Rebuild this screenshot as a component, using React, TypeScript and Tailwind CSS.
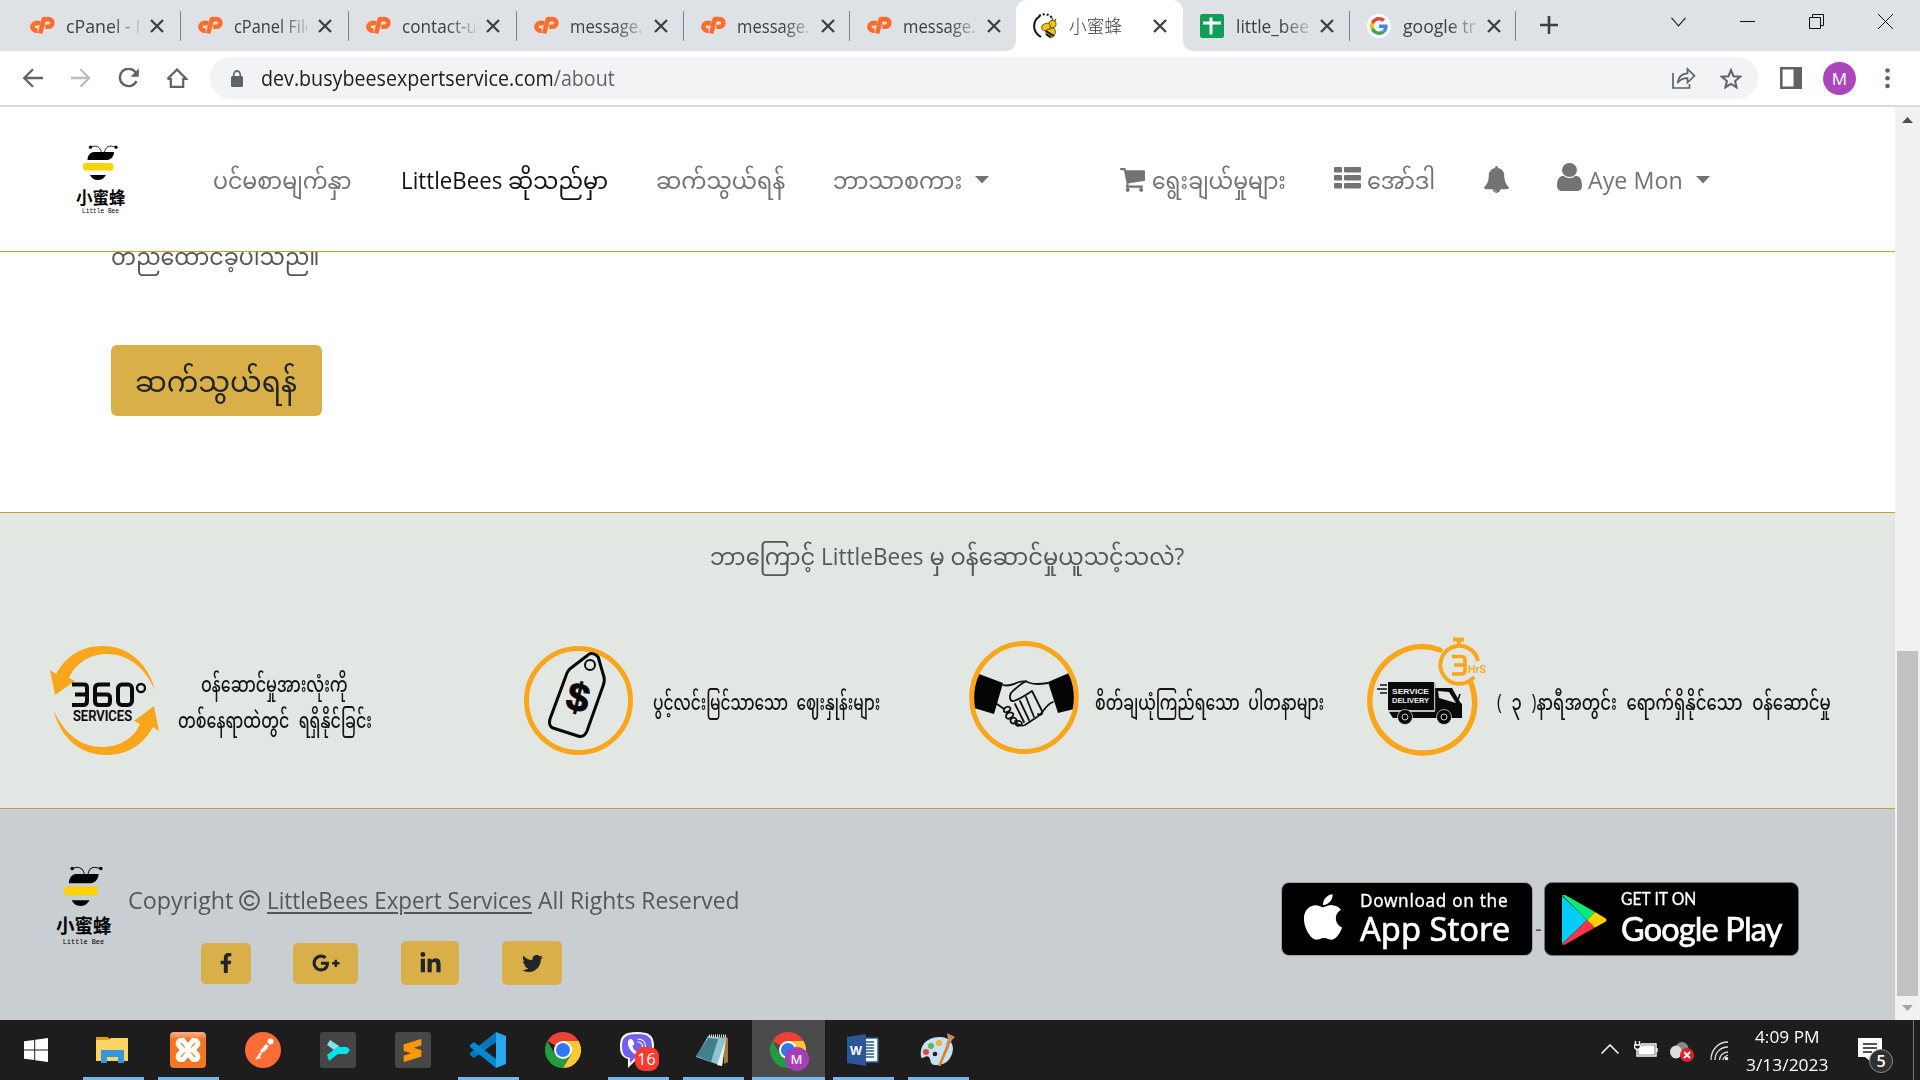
import { useLayoutEffect, useRef, useState } from "react";
import type { ReactNode } from "react";
import { FaFacebookF, FaGooglePlusG, FaLinkedinIn, FaTwitter, FaApple } from "react-icons/fa";
import { SiXampp, SiSublimetext } from "react-icons/si";

/* One line of text that is squeezed or stretched to a given width. */
function Fit({ w, className = "", inner = "", children }: { w: number; className?: string; inner?: string; children: ReactNode }) {
  const ref = useRef<HTMLSpanElement>(null);
  const [scale, setScale] = useState(1);
  useLayoutEffect(() => {
    const natural = ref.current?.offsetWidth ?? 0;
    if (natural > 0) setScale(w / natural);
  }, [w]);
  return (
    <span className={`block shrink-0 whitespace-nowrap ${className}`} style={{ width: w }}>
      <span ref={ref} className={`inline-block origin-left ${inner}`} style={{ transform: `scaleX(${scale})` }}>
        {children}
      </span>
    </span>
  );
}

function CpIcon() {
  return (
    <svg width="25" height="19" viewBox="0 0 25 18" fill="none" stroke="#ff6c2c" strokeWidth="4.600" strokeLinejoin="round">
      <path d="M10.400 6.600H6.400a3.800 3.800 0 0 0-1 7.500h2.200" />
      <path d="M10.200 17 13.800 2.600h4.600a3.700 3.700 0 0 1 .4 7.600h-3.600" />
    </svg>
  );
}

function BeeFavicon() {
  return (
    <svg width="26" height="26" viewBox="0 0 26 26">
      <path d="M8 3C0 8 0 19 9 24" fill="none" stroke="#111" strokeWidth="2" />
      <path d="M7 3c5-3 10-2 13 2" fill="none" stroke="#111" strokeWidth="2.200" strokeDasharray="2 2" />
      <path d="m20 5 1 4m3-3-2 3" stroke="#111" />
      <circle cx="20.500" cy="11" r="3.700" fill="#f7c600" stroke="#111" strokeWidth=".6" />
      <ellipse cx="14" cy="14" rx="4.500" ry="3.500" fill="#f7c600" stroke="#111" strokeWidth=".6" transform="rotate(-20 14 14)" />
      <path d="m14 17 8-2c3 4 1 8-3 10-4-1-6-4-5-8z" fill="#f7c600" stroke="#111" strokeWidth=".6" />
      <path d="m14 18 8 5m-8-2 5 3" stroke="#111" strokeWidth="2" />
    </svg>
  );
}

function SheetsIcon() {
  return (
    <svg width="24" height="24" viewBox="0 0 24 24">
      <rect width="24" height="24" rx="2.500" fill="#0f9d58" />
      <path d="M11 3.500v17M3 9h18" stroke="#fff" strokeWidth="3" />
    </svg>
  );
}

function GoogleIcon() {
  return (
    <svg width="24" height="24" viewBox="0 0 24 24">
      <circle cx="12" cy="12" r="12" fill="#fff" />
      <g transform="translate(3 3) scale(.375)">
        <path fill="#EA4335" d="M24 9.500c3.540 0 6.710 1.220 9.210 3.600l6.850-6.850C35.900 2.380 30.470 0 24 0 14.620 0 6.510 5.380 2.560 13.220l7.980 6.190C12.430 13.720 17.740 9.500 24 9.500z" />
        <path fill="#4285F4" d="M46.980 24.550c0-1.570-.15-3.090-.38-4.550H24v9.020h12.940c-.58 2.960-2.260 5.480-4.780 7.180l7.730 6c4.510-4.180 7.090-10.360 7.090-17.650z" />
        <path fill="#FBBC05" d="M10.530 28.590c-.48-1.450-.76-2.990-.76-4.590s.27-3.140.76-4.590l-7.980-6.190C.92 16.460 0 20.120 0 24c0 3.880.92 7.540 2.560 10.780l7.970-6.190z" />
        <path fill="#34A853" d="M24 48c6.480 0 11.930-2.130 15.890-5.810l-7.730-6c-2.150 1.450-4.920 2.300-8.160 2.300-6.260 0-11.570-4.220-13.470-9.910l-7.980 6.190C6.510 42.620 14.620 48 24 48z" />
      </g>
    </svg>
  );
}

function TabClose() {
  return (
    <svg width="14" height="14" viewBox="0 0 14 14" stroke="#3c4043" strokeWidth="2.300" fill="none">
      <path d="m1 1 12 12M13 1 1 13" />
    </svg>
  );
}

type TabData = { icon: ReactNode; title: string; w: number; textW: number; active?: boolean; sep?: boolean };

const tabs: TabData[] = [
  { icon: <CpIcon />, title: "cPanel - M", w: 168, textW: 85, sep: true },
  { icon: <CpIcon />, title: "cPanel File", w: 168, textW: 80, sep: true },
  { icon: <CpIcon />, title: "contact-us", w: 168, textW: 83, sep: true },
  { icon: <CpIcon />, title: "message.", w: 167, textW: 73, sep: true },
  { icon: <CpIcon />, title: "message.", w: 166, textW: 73, sep: true },
  { icon: <CpIcon />, title: "message.", w: 166, textW: 73 },
  { icon: <BeeFavicon />, title: "小蜜蜂", w: 167, textW: 53, active: true },
  { icon: <SheetsIcon />, title: "little_bee_", w: 167, textW: 81, sep: true },
  { icon: <GoogleIcon />, title: "google tran", w: 166, textW: 93, sep: true },
];

function Tab({ t }: { t: TabData }) {
  return (
    <div
      className={`relative flex h-[51px] shrink-0 items-center pl-[16px] ${t.active ? "rounded-t-[11px] bg-white" : ""}`}
      style={{ width: t.w }}
    >
      <div className="flex w-[26px] shrink-0 justify-center">{t.icon}</div>
      <div
        className={`ml-[11px] w-[73px] shrink-0 overflow-hidden ${
          t.active ? "" : "[mask-image:linear-gradient(to_right,black_62%,rgba(0,0,0,0.2)_100%)]"
        }`}
      >
        <Fit w={t.textW} className={`text-[18px] leading-[26px] text-[#3c4043] ${t.active ? "font-light" : ""}`}>
          {t.title}
        </Fit>
      </div>
      <div className="ml-[11px] flex w-[14px] shrink-0">
        <TabClose />
      </div>
      {t.sep && <div className="absolute right-0 top-[11px] h-[30px] w-[1.5px] bg-[#808387]" />}
      {t.active && (
        <>
          <svg className="absolute -left-[10px] bottom-0" width="10" height="10"><path d="M10 0v10H0A10 10 0 0 0 10 0z" fill="#fff" /></svg>
          <svg className="absolute -right-[10px] bottom-0" width="10" height="10"><path d="M0 0v10h10A10 10 0 0 1 0 0z" fill="#fff" /></svg>
        </>
      )}
    </div>
  );
}

function TabStrip() {
  return (
    <div className="flex h-[51px] bg-[#dee1e6] pl-[13px]">
      {tabs.map((t, i) => (
        <Tab key={i} t={t} />
      ))}
      <svg className="ml-[24px] mt-[16px]" width="18" height="18" stroke="#3c4043" strokeWidth="2.600"><path d="M9 0v18M0 9h18" /></svg>
      <svg className="ml-[113px] mt-[17px]" width="15" height="10" fill="none" stroke="#222" strokeWidth="1.200"><path d="m.5.800 7 8 7-8" /></svg>
      <svg className="ml-[54px] mt-[21px]" width="15" height="2"><path d="M0 .5h15" stroke="#111" /></svg>
      <svg className="ml-[54px] mt-[14px]" width="15" height="15" fill="none" stroke="#111"><path d="M.5 3.500h11v11H.5zM3.500 3V.5h11v11H12" /></svg>
      <svg className="ml-[54px] mt-[14px]" width="15" height="15" stroke="#111"><path d="m0 0 15 15M15 0 0 15" /></svg>
    </div>
  );
}

function Toolbar() {
  return (
    <div className="flex h-[54px] items-center bg-white pl-[22px]">
      <svg width="22" height="20" viewBox="0 0 22 20" fill="none" stroke="#5f6368" strokeWidth="2.300"><path d="M21 10H2.500M11 1.200 2.200 10l8.800 8.800" /></svg>
      <svg className="ml-[27px]" width="20" height="20" viewBox="0 0 20 20" fill="none" stroke="#babcbe" strokeWidth="2.300"><path d="M0 10h17.500M9.500 1.200l8.500 8.800-8.500 8.800" /></svg>
      <svg className="ml-[27px]" width="22" height="20" viewBox="0 0 22 20" fill="none" stroke="#5f6368" strokeWidth="2.400"><path d="M17.800 4.600A8.700 8.700 0 1 0 18.500 13" /><path d="M20.800.5v8.200h-8.200z" fill="#5f6368" stroke="none" /></svg>
      <svg className="ml-[26px]" width="22" height="20" viewBox="0 0 22 20" fill="none" stroke="#5f6368" strokeWidth="2.200"><path d="M4.800 10v8.800h12.400V10M1.500 11 11 1.500l9.500 9.500h-3.600M1.500 11H5" /></svg>
      <div className="ml-[22px] flex h-[42px] w-[1548px] items-center rounded-full bg-[#f1f3f4] pl-[21px]">
        <svg width="12" height="17" viewBox="0 0 13 17" preserveAspectRatio="none"><rect y="6" width="13" height="11" rx="1.500" fill="#5f6368" /><path d="M3 7V4.500a3.500 3.500 0 0 1 7 0V7" fill="none" stroke="#5f6368" strokeWidth="1.800" /></svg>
        <Fit w={354} className="ml-[18px] text-[21px] leading-[30px] text-[#202124]">
          dev.busybeesexpertservice.com<span className="text-[#5f6368]">/about</span>
        </Fit>
        <svg className="ml-[1057px]" width="24" height="22" viewBox="0 0 24 22" fill="none" stroke="#5f6368" strokeWidth="1.700"><path d="M1 6v15h16.500v-4" /><path d="M5.500 16c.8-6.200 4-9.300 10-9.600V2l7 6.800-7 6.700v-4.400c-4.500 0-7.500 1.200-10 4.900z" /></svg>
        <svg className="ml-[24px]" width="22" height="21" viewBox="0 0 22 21" fill="none" stroke="#5f6368" strokeWidth="2"><path d="m11 2.200 2.500 6 6.600.5-5 4.300 1.500 6.400L11 16l-5.600 3.400L6.900 13l-5-4.300 6.600-.5z" /></svg>
      </div>
      <svg className="ml-[22px]" width="22" height="22" viewBox="0 0 22 22"><path d="M1.300 1.300h19.400v19.400H1.300z" fill="none" stroke="#5f6368" strokeWidth="2.600" /><path d="M13.500 1h7.500v20h-7.500z" fill="#5f6368" /></svg>
      <div className="ml-[21px] flex size-[33px] items-center justify-center rounded-full bg-[#ab47bc] text-[17px] leading-none text-white">M</div>
      <svg className="ml-[29px]" width="5" height="21" fill="#5f6368"><circle cx="2.500" cy="2.500" r="2.300" /><circle cx="2.500" cy="10.300" r="2.300" /><circle cx="2.500" cy="18" r="2.300" /></svg>
    </div>
  );
}

function BeeLogo({ className }: { className: string }) {
  return (
    <svg className={className} viewBox="0 0 50 70" preserveAspectRatio="none">
      <path d="M14 2.500c6-3 10-1 11.500 5M40 2.500c-7-3-10.500-1-11.500 5" fill="none" stroke="#111" strokeWidth=".9" />
      <circle cx="14.500" cy="2.200" r="1.600" />
      <circle cx="40" cy="2.200" r="1.600" />
      <path d="M18 7h20c0 4-3 8-7 8H11.500c0-4 2.500-8 6.500-8z" />
      <rect x="7" y="18" width="30.500" height="7.500" rx="3" fill="#ffd200" />
      <path d="M14 30h16c-2 3-4 5-8 5s-6.500-2-8-5z" />
      <text x="0" y="58.500" fontSize="17" fontWeight="600" fontFamily="'Noto Sans CJK SC', sans-serif" textLength="49.500" lengthAdjust="spacingAndGlyphs">小蜜蜂</text>
      <text x="6" y="68" fontSize="6.300" fontFamily="'Liberation Mono', monospace" textLength="37" lengthAdjust="spacingAndGlyphs">Little Bee</text>
    </svg>
  );
}

function Caret() {
  return <svg width="14" height="8"><path d="M0 0h14L7 7.500z" fill="#737373" /></svg>;
}

function Navbar() {
  return (
    <nav className="flex h-[145px] items-start border-b border-[#c9a02a] bg-white pl-[76px] text-[24px] leading-[32px] text-[#737373]">
      <BeeLogo className="mt-[38px] h-[70px] w-[50px]" />
      <div className="mt-[57px] flex items-center">
        <Fit w={139} className="ml-[87px]">ပင်မစာမျက်နှာ</Fit>
        <Fit w={207} className="ml-[49px] text-[#111]">LittleBees ဆိုသည်မှာ</Fit>
        <Fit w={129} className="ml-[48px]">ဆက်သွယ်ရန်</Fit>
        <Fit w={129} className="ml-[48px] mr-[13px]">ဘာသာစကား</Fit>
        <Caret />
        <svg className="ml-[131px]" width="25" height="24" viewBox="64 256 1664 1408" preserveAspectRatio="none" fill="#737373"><path d="M704 1536q0 52-38 90t-90 38-90-38-38-90 38-90 90-38 90 38 38 90zm896 0q0 52-38 90t-90 38-90-38-38-90 38-90 90-38 90 38 38 90zm128-1088v512q0 24-16.500 42.500t-40.500 21.500l-1044 122q13 60 13 70 0 16-24 64h920q26 0 45 19t19 45-19 45-45 19h-1024q-26 0-45-19t-19-45q0-11 8-31.500t16-36 21.500-40 15.500-29.500l-177-823h-204q-26 0-45-19t-19-45 19-45 45-19h256q16 0 28.500 6.500t19.500 15.500 13 24.500 8 26 5.500 29.500 4.500 26h1201q26 0 45 19t19 45z" /></svg>
        <Fit w={134} className="ml-[7px]">ရွေးချယ်မှုများ</Fit>
        <svg className="-mt-[4px] ml-[48px]" width="27" height="22" fill="#737373"><rect width="8" height="5.500" rx="1" /><rect x="10" width="17" height="5.500" rx="1" /><rect y="8" width="8" height="5.500" rx="1" /><rect x="10" y="8" width="17" height="5.500" rx="1" /><rect y="16" width="8" height="5.500" rx="1" /><rect x="10" y="16" width="17" height="5.500" rx="1" /></svg>
        <Fit w={68} className="ml-[6px]">အော်ဒါ</Fit>
        <svg className="-mt-[2px] ml-[49px]" width="25" height="27" viewBox="64 0 1664 1792" preserveAspectRatio="none" fill="#737373"><path d="M912 1696q0-16-16-16-59 0-101.500-42.500t-42.500-101.500q0-16-16-16t-16 16q0 73 51.500 124.500t124.500 51.500q16 0 16-16zm816-288q0 52-38 90t-90 38h-448q0 106-75 181t-181 75-181-75-75-181h-448q-52 0-90-38t-38-90q50-42 91-88t85-119.500 74.500-158.500 50-206 19.500-260q0-152 117-282.500t307-158.500q-8-19-8-39 0-40 28-68t68-28 68 28 28 68q0 20-8 39 190 28 307 158.500t117 282.500q0 139 19.500 260t50 206 74.500 158.500 85 119.500 91 88z" /></svg>
        <svg className="-mt-[6px] ml-[48px]" width="25" height="28" viewBox="0 128 1280 1536" preserveAspectRatio="none" fill="#737373"><path d="M1280 1399q0 109-62.500 187t-150.500 78h-854q-88 0-150.500-78t-62.500-187q0-85 8.500-160.500t31.500-152 58.500-131 94-89 134.500-34.500q131 128 313 128t313-128q76 0 134.500 34.500t94 89 58.500 131 31.500 152 8.500 160.500zm-256-887q0 159-112.500 271.500t-271.500 112.500-271.500-112.500-112.500-271.500 112.500-271.500 271.500-112.500 271.500 112.500 112.500 271.500z" /></svg>
        <Fit w={95} className="ml-[6px] mr-[13px]">Aye Mon</Fit>
        <Caret />
      </div>
    </nav>
  );
}

function Services360() {
  return (
    <svg className="h-[109px] w-[109px]" viewBox="0 0 109 109">
      <path d="M0 24 6 28C17 8 34 0 53 0c25 0 45 17 52 44C94 20 77 8 57 8 39 8 25 18 19 32l6 3L5 49z" fill="#faa61a" />
      <path d="M109 85l-6-4C92 101 75 109 56 109 31 109 10 92 4 65c11 24 28 36 48 36 18 0 32-9 38-23l-6-3 20-15z" fill="#faa61a" />
      <g fill="none" stroke="#0b0b0b" strokeWidth="4">
        <path d="M22 38.500h12q3 0 3 3V55q0 4-4 4H22M25 48.500h11" />
        <path d="M60 38.500H49q-4 0-4 4V55q0 4 4 4h8q3 0 3-4v-3q0-3.500-3-3.500H46" />
        <rect x="68" y="38.500" width="14" height="20.500" rx="4" />
        <circle cx="91" cy="42" r="4" strokeWidth="2.300" />
      </g>
      <text x="23" y="75" fontSize="14.500" fontFamily="Roboto, sans-serif" stroke="#0b0b0b" strokeWidth=".2" textLength="59" lengthAdjust="spacingAndGlyphs">SERVICES</text>
    </svg>
  );
}

function PriceTag() {
  return (
    <svg className="h-[109px] w-[109px]" viewBox="0 0 109 109" fill="none">
      <circle cx="54.500" cy="54.500" r="52" stroke="#faa61a" strokeWidth="5" />
      <path d="M64 9q3-3 8 0 3 2 3 5l5 17q1 4-1 9L63 85q-3 7-9 5L29 82q-5-2-3-9l17-46q1-3 4-5z" stroke="#080808" strokeWidth="3" />
      <circle cx="66" cy="19" r="5" stroke="#080808" strokeWidth="2" />
      <text x="42.500" y="65" transform="rotate(13 54 54)" fontSize="40" fontWeight="900" fontFamily="'Liberation Sans', sans-serif" fill="#080808" stroke="#080808">$</text>
    </svg>
  );
}

function Handshake() {
  return (
    <svg className="h-[113px] w-[110px]" viewBox="0 0 110 113" fill="none">
      <path d="M10 33 34 42 25 73 5 67Q2 48 10 33zM100 32 79 41l10 31 16-4q4-19-5-36z" fill="#050505" />
      <g stroke="#111" strokeWidth="1.800" strokeLinejoin="round" strokeLinecap="round">
        <path d="M34 44c7 2 10-1 16-3 4-1 7-1 11 1 6 2 12 1 18 0M28 63l7 5M84 61c-4 1-7 5-10 9-3 5-8 7-12 10l-6 4c-5 2-8-1-10-4" />
        <path d="M57 40c-6 4-11 7-15 12-2 4-1 9 3 8 6-2 12-6 18-10l10 20c1 3-1 5-4 3M57 56l8 20M51 60l9 19M46 63l9 18" />
        <path d="M36 67c-3 3 0 6 4 3s-1-6-4-3zm2 6c-3 3 1 7 5 3s-2-6-5-3zm4 5c-2 4 3 6 5 3s-2-6-5-3zm5 3c-2 3 2 5 5 3s-2-6-5-3z" />
      </g>
      <ellipse cx="55" cy="56.500" rx="52.300" ry="54" stroke="#faa61a" strokeWidth="5" />
    </svg>
  );
}

function DeliveryTruck() {
  return (
    <svg className="h-[119px] w-[119px]" viewBox="0 0 119 119" fill="none">
      <path d="M73 13C44 2 14 20 5 48c-10 34 15 68 50 68 40 0 62-36 49-70" stroke="#faa61a" strokeWidth="5.500" strokeLinecap="round" />
      <path d="M111 24a19 19 0 1 0-4 16M92 1v9M86 2.500h11" stroke="#faa61a" strokeWidth="4" />
      <path d="M85 19.500h9q4 0 4 3v11q0 3.500-4 3.500h-9M87 28h10" stroke="#faa61a" strokeWidth="3.600" />
      <text x="101" y="36" fontSize="11.500" fontWeight="500" fill="#faa61a" fontFamily="Roboto, sans-serif" textLength="18" lengthAdjust="spacingAndGlyphs">HrS</text>
      <path d="M21 45h46v28H21zM68 51h17l8 14 2 2v14H26l-4-6h46z" fill="#0a0a0a" />
      <path d="m71 54 11 1 7 11-17-5z" fill="#e2e7e3" />
      <path d="m91 63 2-6M13 48h7m-10 4h10m-7 4h7" stroke="#111" strokeWidth="1.600" />
      <path d="M22 74h46V46" stroke="#777" strokeWidth=".7" />
      <g stroke="#e2e7e3" strokeWidth=".7"><circle cx="38" cy="80" r="7.500" fill="#0a0a0a" /><circle cx="77" cy="80" r="7.500" fill="#0a0a0a" /></g>
      <circle cx="38" cy="80" r="3" stroke="#ccc" /><circle cx="77" cy="80" r="3" stroke="#ccc" />
      <g fill="#eee" fontSize="7.500" fontWeight="700" fontFamily="'Liberation Sans', sans-serif">
        <text x="25" y="57" textLength="37" lengthAdjust="spacingAndGlyphs">SERVICE</text>
        <text x="25" y="66" textLength="37" lengthAdjust="spacingAndGlyphs">DELIVERY</text>
      </g>
    </svg>
  );
}

function Features() {
  return (
    <section className="h-[297px] border-y border-[#cf9d2c] bg-[#e2e7e3]">
      <Fit w={474} className="ml-[710px] mt-[26px] text-[24px] leading-[34px] text-[#575757]">
        ဘာကြောင့် LittleBees မှ ဝန်ဆောင်မှုယူသင့်သလဲ?
      </Fit>
      <div className="mt-[64px] flex items-start pl-[50px] text-[21px] font-medium leading-[36px] text-[#151515]">
        <div className="mt-[9px]"><Services360 /></div>
        <div className="ml-[19px] mt-[29px]">
          <Fit w={147} className="ml-[23px]">ဝန်ဆောင်မှုအားလုံးကို</Fit>
          <Fit w={194} inner="[word-spacing:7px]">တစ်နေရာထဲတွင် ရရှိနိုင်ခြင်း</Fit>
        </div>
        <div className="ml-[152px] mt-[9px]"><PriceTag /></div>
        <Fit w={227} className="ml-[20px] mt-[47px]" inner="[word-spacing:6px]">ပွင့်လင်းမြင်သာသော ဈေးနှုန်းများ</Fit>
        <div className="ml-[89px] mt-[4px]"><Handshake /></div>
        <Fit w={229} className="ml-[16px] mt-[47px]" inner="[word-spacing:6px]">စိတ်ချယုံကြည်ရသော ပါတနာများ</Fit>
        <div className="ml-[43px]"><DeliveryTruck /></div>
        <Fit w={334} className="ml-[11px] mt-[47px]" inner="[word-spacing:7px]">( ၃ )နာရီအတွင်း ရောက်ရှိနိုင်သော ဝန်ဆောင်မှု</Fit>
      </div>
    </section>
  );
}

function CopyrightMark() {
  return (
    <svg className="ml-[6px]" width="21" height="21" viewBox="0 0 21 21" fill="none" stroke="#575757" strokeWidth="1.900">
      <circle cx="10.500" cy="10.500" r="9.400" />
      <path d="M14.700 8.300A4.700 4.700 0 1 0 14.700 12.700" />
    </svg>
  );
}

function Footer() {
  return (
    <footer className="flex h-[211px] items-start bg-[#c9ced2] pl-[56px] text-[24px] leading-[32px] text-[#575757]">
      <BeeLogo className="mt-[57px] h-[80px] w-[56px] shrink-0" />
      <div className="ml-[17px] mt-[74px] w-[650px] shrink-0">
        <div className="flex h-[34px] items-center">
          <Fit w={105} className="-ml-px">Copyright</Fit>
          <CopyrightMark />
          <Fit w={265} className="ml-[7px]" inner="underline decoration-[1.5px] underline-offset-[3px]">LittleBees Expert Services</Fit>
          <Fit w={202} className="ml-[6px]">All Rights Reserved</Fit>
        </div>
        <div className="mt-[24px] flex h-[44px] items-center pl-[72px] text-[#212529]">
          <div className="flex h-[41px] w-[50px] items-center justify-center rounded-[5px] bg-[#d9af4a]"><FaFacebookF size={20} /></div>
          <div className="ml-[42px] flex h-[41px] w-[65px] items-center justify-center rounded-[5px] bg-[#d9af4a]"><FaGooglePlusG size={28} /></div>
          <div className="ml-[43px] flex h-[44px] w-[58px] items-center justify-center rounded-[5px] bg-[#d9af4a]"><FaLinkedinIn size={23} /></div>
          <div className="ml-[43px] flex h-[44px] w-[60px] items-center justify-center rounded-[5px] bg-[#d9af4a]"><FaTwitter size={21} /></div>
        </div>
      </div>
      <div className="ml-[502px] mt-[73px] flex text-white">
        <div className="flex h-[74px] w-[252px] rounded-[8px] border border-[#a6a6a6] bg-black pl-[15px]">
          <FaApple size={52} className="mt-[8px] shrink-0" />
          <div className="ml-[11px]">
            <Fit w={148} className="mt-[5px] text-[17.5px] leading-[24px]" inner="tracking-[0.7px] [-webkit-text-stroke:0.3px_white] [font-family:'Noto_Sans',sans-serif]">Download on the</Fit>
            <Fit w={150} className="text-[32px] leading-[33px]" inner="[-webkit-text-stroke:0.6px_white] [font-family:'Noto_Sans',sans-serif]">App Store</Fit>
          </div>
        </div>
        <Fit w={7} className="ml-[2px] mt-[30px] text-[#575757]">-</Fit>
        <div className="ml-[2px] flex h-[74px] w-[255px] rounded-[8px] border border-[#777] bg-black pl-[16px]">
          <svg className="mt-[12px] shrink-0" width="46" height="50" viewBox="0 0 46 50">
            <path d="M1 1v48l25-24z" fill="#00cdfc" /><path d="M1 0q2-1 5 1l28 16-8 8z" fill="#00ee76" /><path d="M1 49.500q2 1 5-1l28-16-8-7.500z" fill="#f93647" /><path d="m34 17 10 6q3 2 0 4l-10 5.500-8-7.500z" fill="#ffce00" />
          </svg>
          <div className="ml-[14px]">
            <Fit w={75} className="mt-[4px] text-[17px] leading-[24px]" inner="[-webkit-text-stroke:0.3px_white] [font-family:Lato,sans-serif]">GET IT ON</Fit>
            <Fit w={161} className="text-[33px] leading-[34px]" inner="tracking-tight [-webkit-text-stroke:0.7px_white] [font-family:Lato,sans-serif]">Google Play</Fit>
          </div>
        </div>
      </div>
    </footer>
  );
}

function Scrollbar() {
  return (
    <div className="flex h-[913px] w-[25px] flex-col items-center bg-[#f1f1f1]">
      <svg className="mt-[10px]" width="11" height="6"><path d="M0 6h11L5.500 0z" fill="#505050" /></svg>
      <div className="mt-[528px] h-[345px] w-[21px] bg-[#c1c1c1]" />
      <svg className="mt-[9px]" width="11" height="6"><path d="M0 0h11L5.500 6z" fill="#a3a3a3" /></svg>
    </div>
  );
}

function ChromeIcon() {
  return (
    <svg width="36" height="36" viewBox="0 0 36 36">
      <path d="M18 18 2.400 9A18 18 0 0 1 33.600 9z" fill="#ea4335" />
      <path d="M18 36A18 18 0 0 1 2.400 9l7.800 13.500L18 18l7.800 4.500z" fill="#249a41" />
      <path d="M18 9h15.600A18 18 0 0 1 18 36l8-13.500z" fill="#fcc934" />
      <circle cx="18" cy="18" r="9" fill="#fff" /><circle cx="18" cy="18" r="7" fill="#2f78ee" />
    </svg>
  );
}

const icons = {
  explorer: (
    <svg width="33" height="28" viewBox="0 0 33 28"><path d="M0 1h12l2 3h-14z" fill="#e09c0c" /><path d="M0 4h12l3-2h17v23H0z" fill="#fcd462" /><path d="M5 14h23v13h-6v-6H11v6H5z" fill="#3795df" /></svg>
  ),
  xampp: (
    <div className="flex size-[36px] items-center justify-center rounded-[4px] bg-linear-to-b from-[#f8a878] from-5% to-[#f37623] to-20% text-white">
      <svg width="28" height="26" viewBox="0 0 28 26" fill="none" stroke="#fff" strokeWidth="5" strokeLinecap="round" strokeLinejoin="round">
        <path d="M8 3.500H6.500a3 3 0 0 0-1.500 5l4 4.500-4 4.500a3 3 0 0 0 1.500 5H9l4-5M20 3.500h1.500a3 3 0 0 1 1.500 5L19 13l4 4.500a3 3 0 0 1-1.500 5H19l-4-5M9 3.500l4 5M19 3.500l-4 5M9 13h10" />
      </svg>
    </div>
  ),
  postman: (
    <svg width="36" height="36" viewBox="0 0 36 36"><circle cx="18" cy="18" r="18" fill="#ff6c37" /><circle cx="25.500" cy="9.500" r="3" fill="#fff" /><path d="m21 12 3 2-7 7-2-2zM15 20l2 2-2 2 1 2-6 2 2-3z" fill="#fff" /><path d="m19 20 4-4" stroke="#fff" /></svg>
  ),
  arrow: (
    <svg width="36" height="36" viewBox="0 0 36 36"><rect width="36" height="36" rx="3" fill="#454545" /><path d="m10 8 9 6-2 6-10-7z" fill="#8adfe5" /><path d="m7 23 10-8h10l3 3-3 4h-9L9 29z" fill="#00e4e9" /></svg>
  ),
  sublime: (
    <div className="flex size-[36px] items-center justify-center rounded-[3px] bg-[#474747] text-[#ff9800]"><SiSublimetext size={23} /></div>
  ),
  vscode: (
    <svg width="37" height="36" viewBox="0 0 37 36"><path d="M27 0v10L5 26l-4-3v-2z" fill="#0277bc" /><path d="m1 13 4-3 22 17v9L1 15z" fill="#0288d1" /><path d="m27 0 10 4v28l-10 4z" fill="#29a7f0" /></svg>
  ),
  chrome: <ChromeIcon />,
  viber: (
    <div className="relative size-[36px]">
      <svg width="35" height="36" viewBox="0 0 35 36"><path d="M17 0C5 0 0 3 0 14c0 8 2 11 8 13v9l8-8C29 28 34 26 34 14 34 3 29 0 17 0z" fill="#fff" /><path d="M17 2C6 2 2 5 2 14s3 11 8 12v5l5-5c13 0 17-3 17-12S28 2 17 2z" fill="#7360f2" /><path d="M9 8c3-2 4 1 5 4l-2 2c1 4 3 5 5 6l2-2c4 1 6 3 4 5-7 3-17-7-14-15z" fill="#fff" stroke="#fff" /><path d="M17.500 7c5 0 8 3 8 8m-8-5c3 0 5 2 5 5" fill="none" stroke="#fff" strokeWidth="1.200" /></svg>
      <div className="absolute left-[15px] top-[15px] flex h-[24px] w-[24px] items-center justify-center rounded-[9px] bg-[#ff3b30] text-[16px] leading-none text-white">16</div>
    </div>
  ),
  notepad: (
    <svg width="34" height="33" viewBox="0 0 34 33"><path d="m28 2 4 2v24l-4 2z" fill="#aa7a38" /><path d="m12 2 18 2-4 28-26-9z" fill="#8dc4cf" /><path d="m30 4-4 28-5-1z" fill="#e7f1f2" /><path d="m12 4 10 1-7 23-15-6z" fill="#407f8d" /><path d="M13 2h17" stroke="#ddd" strokeWidth="3" strokeDasharray="1 1" /></svg>
  ),
  chromeM: (
    <div className="relative size-[36px]">
      <ChromeIcon />
      <div className="absolute left-[15px] top-[15px] flex size-[24px] items-center justify-center rounded-full bg-[#a63eb7] text-[13px] font-semibold leading-none text-[#eee]">M</div>
    </div>
  ),
  word: (
    <svg width="32" height="32" viewBox="0 0 32 32"><path d="M18 4h13v24H18z" fill="#fff" stroke="#2b579a" strokeWidth="1.500" /><path d="M18 8h9m-9 3h9m-9 3h9m-9 3h9m-9 3h9m-9 3h9" stroke="#2b579a" strokeWidth="1.500" /><path d="m0 3 19-3v32L0 29z" fill="#2b579a" /><text x="3" y="21" fontFamily="'Open Sans', sans-serif" fontWeight="700" fontSize="13" textLength="12" lengthAdjust="spacingAndGlyphs" fill="#fff">W</text></svg>
  ),
  paint: (
    <svg width="36" height="36" viewBox="0 0 36 36"><path d="M1 25C-1 12 8 5 20 5c11 0 15 9 12 17-3 9-10 11-17 11-5 0-4-5-6-8-3-3-6 3-8 0z" fill="#c9e2f3" /><circle cx="6" cy="20" r="3" fill="#df4b3b" /><circle cx="11" cy="14" r="3" fill="#5cb855" /><circle cx="19" cy="11" r="3" fill="#f3ae2c" /><circle cx="15" cy="22" r="2.300" fill="#222" /><path d="M18 34 26.500 13l3 1-9 20z" fill="#e08229" /><path d="m26 13 2-6-1-6 8 4-3 3-3 6z" fill="#c78d59" /></svg>
  ),
};

type TaskData = { icon: ReactNode; line?: boolean; active?: boolean };
const tasks: TaskData[] = [
  { icon: icons.explorer, line: true },
  { icon: icons.xampp, line: true },
  { icon: icons.postman },
  { icon: icons.arrow },
  { icon: icons.sublime },
  { icon: icons.vscode, line: true },
  { icon: icons.chrome },
  { icon: icons.viber, line: true },
  { icon: icons.notepad, line: true },
  { icon: icons.chromeM, active: true },
  { icon: icons.word, line: true },
  { icon: icons.paint, line: true },
];

function Taskbar() {
  return (
    <div className="flex h-[60px] bg-[#1d1d1d]">
      <div className="flex h-[60px] w-[76px] shrink-0 items-center pl-[24px]">
        <svg width="24" height="24" fill="#fff"><path d="M0 3.300 10.200 2v9.500H0zM11.200 1.800 24 0v11.500H11.200zM0 12.500h10.200V22L0 20.700zM11.200 12.500H24V24l-12.800-1.800z" /></svg>
      </div>
      {tasks.map((t, i) => (
        <div key={i} className="flex w-[75px] shrink-0 flex-col items-center">
          <div className={`flex h-[57px] items-center justify-center pr-[2px] pt-[3px] ${t.active ? "w-[73px] bg-[#4b4b4b]" : "w-[61px]"}`}>{t.icon}</div>
          <div className={`h-[3px] ${t.active ? "w-[73px] bg-[#76b9ed]" : t.line ? "w-[61px] bg-[#76b9ed]" : "w-[61px]"}`} />
        </div>
      ))}
      <div className="ml-[625px] flex items-start text-white">
        <svg className="mt-[24px]" width="18" height="11" fill="none" stroke="#fff" strokeWidth="1.500"><path d="m.5 9.500 8.500-8.500 8.500 8.500" /></svg>
        <svg className="ml-[15px] mt-[20px]" width="24" height="18" viewBox="0 0 24 18" fill="none" stroke="#fff" strokeWidth="1.400"><path d="M7 4h15v12H3v-6" /><path d="M8 6h12v8H5v-4z" fill="#fff" /><path d="M23 8v4M1.500 1v4M5.500 1v4M.5 5h6v2.500q-3 4-6 0z" fill="#1d1d1d" /></svg>
        <svg className="ml-[12px] mt-[22px]" width="25" height="20" viewBox="0 0 25 20"><circle cx="12" cy="6.500" r="6.500" fill="#888" /><ellipse cx="6" cy="10" rx="6" ry="6.500" fill="#ddd" /><circle cx="17" cy="13" r="7" fill="#dc2328" /><path d="m14 10 6 6m0-6-6 6" stroke="#fff" strokeWidth="1.800" /></svg>
        <svg className="ml-[15px] mt-[21px]" width="19" height="20" viewBox="0 0 19 20" fill="none" stroke="#ddd" strokeWidth="1.300"><path d="M1 19C1 9 8 1 18 1M5 19C5 12 10 6 18 6M9.500 19c0-4 3.500-8 8.500-8M13 19q0-3 5-5" /><circle cx="16.500" cy="17.500" r="1.200" fill="#fff" /></svg>
        <div className="ml-[16px] flex w-[84px] flex-col items-center pt-[3px] text-[17px] leading-[28px]">
          <Fit w={65}>4:09 PM</Fit>
          <Fit w={83}>3/13/2023</Fit>
        </div>
        <div className="relative ml-[29px] mt-[18px] h-[30px] w-[38px]">
          <svg width="24" height="25" viewBox="0 0 24 25"><path d="M0 0h24v19H13v5l-6-5H0z" fill="#fff" /><path d="M5 6h14M5 10h14M5 14h9" stroke="#1d1d1d" strokeWidth="1.300" /></svg>
          <div className="absolute left-[11px] top-[11px] flex size-[24px] items-center justify-center rounded-full border border-[#8a8a8a] bg-[#303030] text-[16px] font-semibold leading-none">5</div>
        </div>
        <div className="ml-[17px] h-[60px] w-px bg-[#777]" />
      </div>
    </div>
  );
}

export default function App() {
  return (
    <div className="h-[1080px] w-[1920px] overflow-hidden bg-white [font-family:'Open_Sans','Noto_Sans_Myanmar','Noto_Sans_CJK_SC',sans-serif]">
      <TabStrip />
      <Toolbar />
      <div className="h-[2px] bg-[#dadce0]" />
      <div className="flex h-[913px]">
        <div className="w-[1895px]">
          <Navbar />
          <main className="h-[260px] overflow-hidden pl-[111px]">
            <Fit w={209} className="-mt-[13px] text-[24px] leading-[34px] text-[#575757]">တည်ထောင်ခဲ့ပါသည်။</Fit>
            <div className="mt-[72px] flex h-[71px] w-[211px] items-center rounded-[6px] bg-[#d9af4a] pl-[24px] text-[29px] leading-[40px] text-[#212529]">
              <Fit w={162}>ဆက်သွယ်ရန်</Fit>
            </div>
          </main>
          <Features />
          <Footer />
        </div>
        <Scrollbar />
      </div>
      <Taskbar />
    </div>
  );
}
